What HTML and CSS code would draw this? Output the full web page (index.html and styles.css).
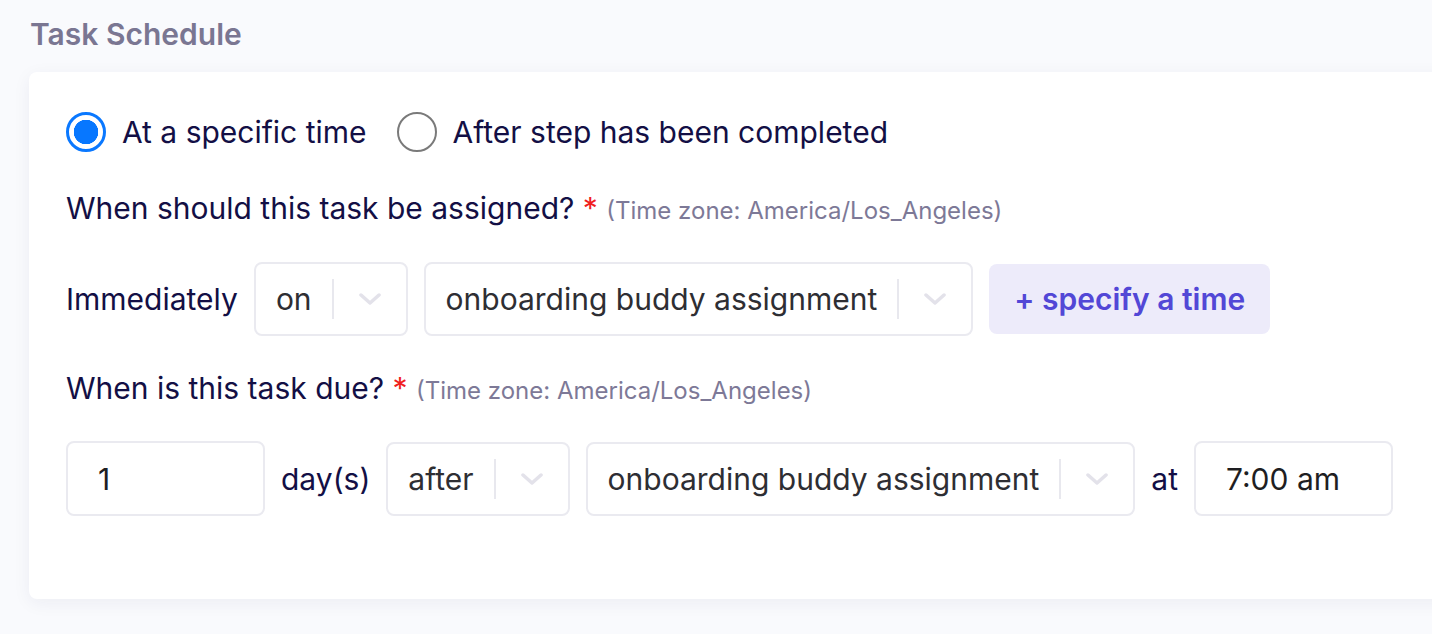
FILE: index.html
```html
<html>
    <head>
        <title> Task Schedule </title>
        <link rel="stylesheet" href="styles.css">
    </head>
    <body>
        <div class="content">
            <h2 class="sectionTitle">Task Schedule</h2>
            <div class="card">
                <div class="radioGroup">
                    <label class="radio">
                        <span class="radioDot checked"></span>
                        At a specific time
                    </label>
                    <label class="radio">
                        <span class="radioDot"></span>
                        After step has been completed
                    </label>
                </div>

                <p class="question">
                    When should this task be assigned? <span class="required">*</span>
                    <span class="tz">(Time zone: America/Los_Angeles)</span>
                </p>
                <div class="fieldRow">
                    <span class="rowText">Immediately</span>
                    <div class="select">
                        <span class="selectValue">on</span>
                        <span class="selectSep"></span>
                        <span class="selectArrow">
                            <svg width="22" height="12" viewBox="0 0 22 12"><path d="M2 2 L11 10 L20 2" fill="none" stroke="#E3E2EA" stroke-width="3.5" stroke-linecap="round" stroke-linejoin="round"/></svg>
                        </span>
                    </div>
                    <div class="select">
                        <span class="selectValue">onboarding buddy assignment</span>
                        <span class="selectSep"></span>
                        <span class="selectArrow">
                            <svg width="22" height="12" viewBox="0 0 22 12"><path d="M2 2 L11 10 L20 2" fill="none" stroke="#E3E2EA" stroke-width="3.5" stroke-linecap="round" stroke-linejoin="round"/></svg>
                        </span>
                    </div>
                    <button class="addTime">+ specify a time</button>
                </div>

                <p class="question due">
                    When is this task due? <span class="required">*</span>
                    <span class="tz">(Time zone: America/Los_Angeles)</span>
                </p>
                <div class="fieldRow">
                    <input type="text" class="textInput" value="1">
                    <span class="rowText">day(s)</span>
                    <div class="select">
                        <span class="selectValue">after</span>
                        <span class="selectSep"></span>
                        <span class="selectArrow">
                            <svg width="22" height="12" viewBox="0 0 22 12"><path d="M2 2 L11 10 L20 2" fill="none" stroke="#E3E2EA" stroke-width="3.5" stroke-linecap="round" stroke-linejoin="round"/></svg>
                        </span>
                    </div>
                    <div class="select">
                        <span class="selectValue">onboarding buddy assignment</span>
                        <span class="selectSep"></span>
                        <span class="selectArrow">
                            <svg width="22" height="12" viewBox="0 0 22 12"><path d="M2 2 L11 10 L20 2" fill="none" stroke="#E3E2EA" stroke-width="3.5" stroke-linecap="round" stroke-linejoin="round"/></svg>
                        </span>
                    </div>
                    <span class="rowText">at</span>
                    <input type="text" class="textInput" value="7:00 am">
                </div>
            </div>
        </div>
    </body>
</html>
```

FILE: styles.css
```css
body {
    margin: 0;
    font-family: Inter, "Liberation Sans", sans-serif;
    background: #F9FAFD;
    color: #130F45;
    overflow: hidden;
}
.content {
    padding: 14px 0 0 29px;
}
.sectionTitle {
    margin: 0 0 18px 1px;
    font-size: 30px;
    font-weight: 600;
    line-height: 40px;
    color: #7A7692;
}
/* Card runs off the right edge of the window */
.card {
    width: 1460px;
    box-sizing: border-box;
    background: #FFFFFF;
    border-radius: 8px;
    box-shadow: 0 4px 18px rgba(30, 30, 80, 0.06);
    padding: 40px 0 83px 37px;
}
.radioGroup {
    display: flex;
    gap: 30px;
    height: 40px;
    align-items: center;
}
.radio {
    display: flex;
    align-items: center;
    gap: 16px;
    font-size: 30px;
}
.radioDot {
    width: 40px;
    height: 40px;
    box-sizing: border-box;
    border-radius: 50%;
    border: 2px solid #7A7A7A;
}
.radioDot.checked {
    border: 3px solid #0A78FF;
    background: radial-gradient(circle, #0777FF 0, #0777FF 12px, #FFFFFF 12.5px);
}
.question {
    margin: 36px 0 33px 0;
    font-size: 30px;
    line-height: 40px;
    height: 40px;
}
.question.due {
    margin-top: 32px;
}
.required {
    color: #F01E1E;
}
.tz {
    font-size: 24px;
    color: #7D7997;
}
.fieldRow {
    display: flex;
    align-items: center;
    gap: 16px;
    height: 75px;
}
.rowText {
    font-size: 30px;
}
.select {
    display: flex;
    align-items: center;
    height: 74px;
    box-sizing: border-box;
    border: 2px solid #EAEAF0;
    border-radius: 8px;
    font-size: 30px;
    color: #2E2E33;
}
.selectValue {
    padding: 0 20px 0 20px;
}
.selectSep {
    width: 2px;
    height: 40px;
    background: #E8E8EE;
}
.selectArrow {
    width: 72px;
    display: flex;
    justify-content: center;
    align-items: center;
}
.addTime {
    height: 70px;
    padding: 0 25px;
    border: none;
    border-radius: 8px;
    background: #EDEBFA;
    color: #5247D6;
    font-family: Inter, "Liberation Sans", sans-serif;
    font-size: 30px;
    font-weight: 600;
    cursor: pointer;
}
.textInput {
    width: 199px;
    height: 75px;
    box-sizing: border-box;
    border: 2px solid #EAEAF0;
    border-radius: 8px;
    padding: 0 30px;
    font-family: Inter, "Liberation Sans", sans-serif;
    font-size: 30px;
    color: #1E1E22;
}
```
